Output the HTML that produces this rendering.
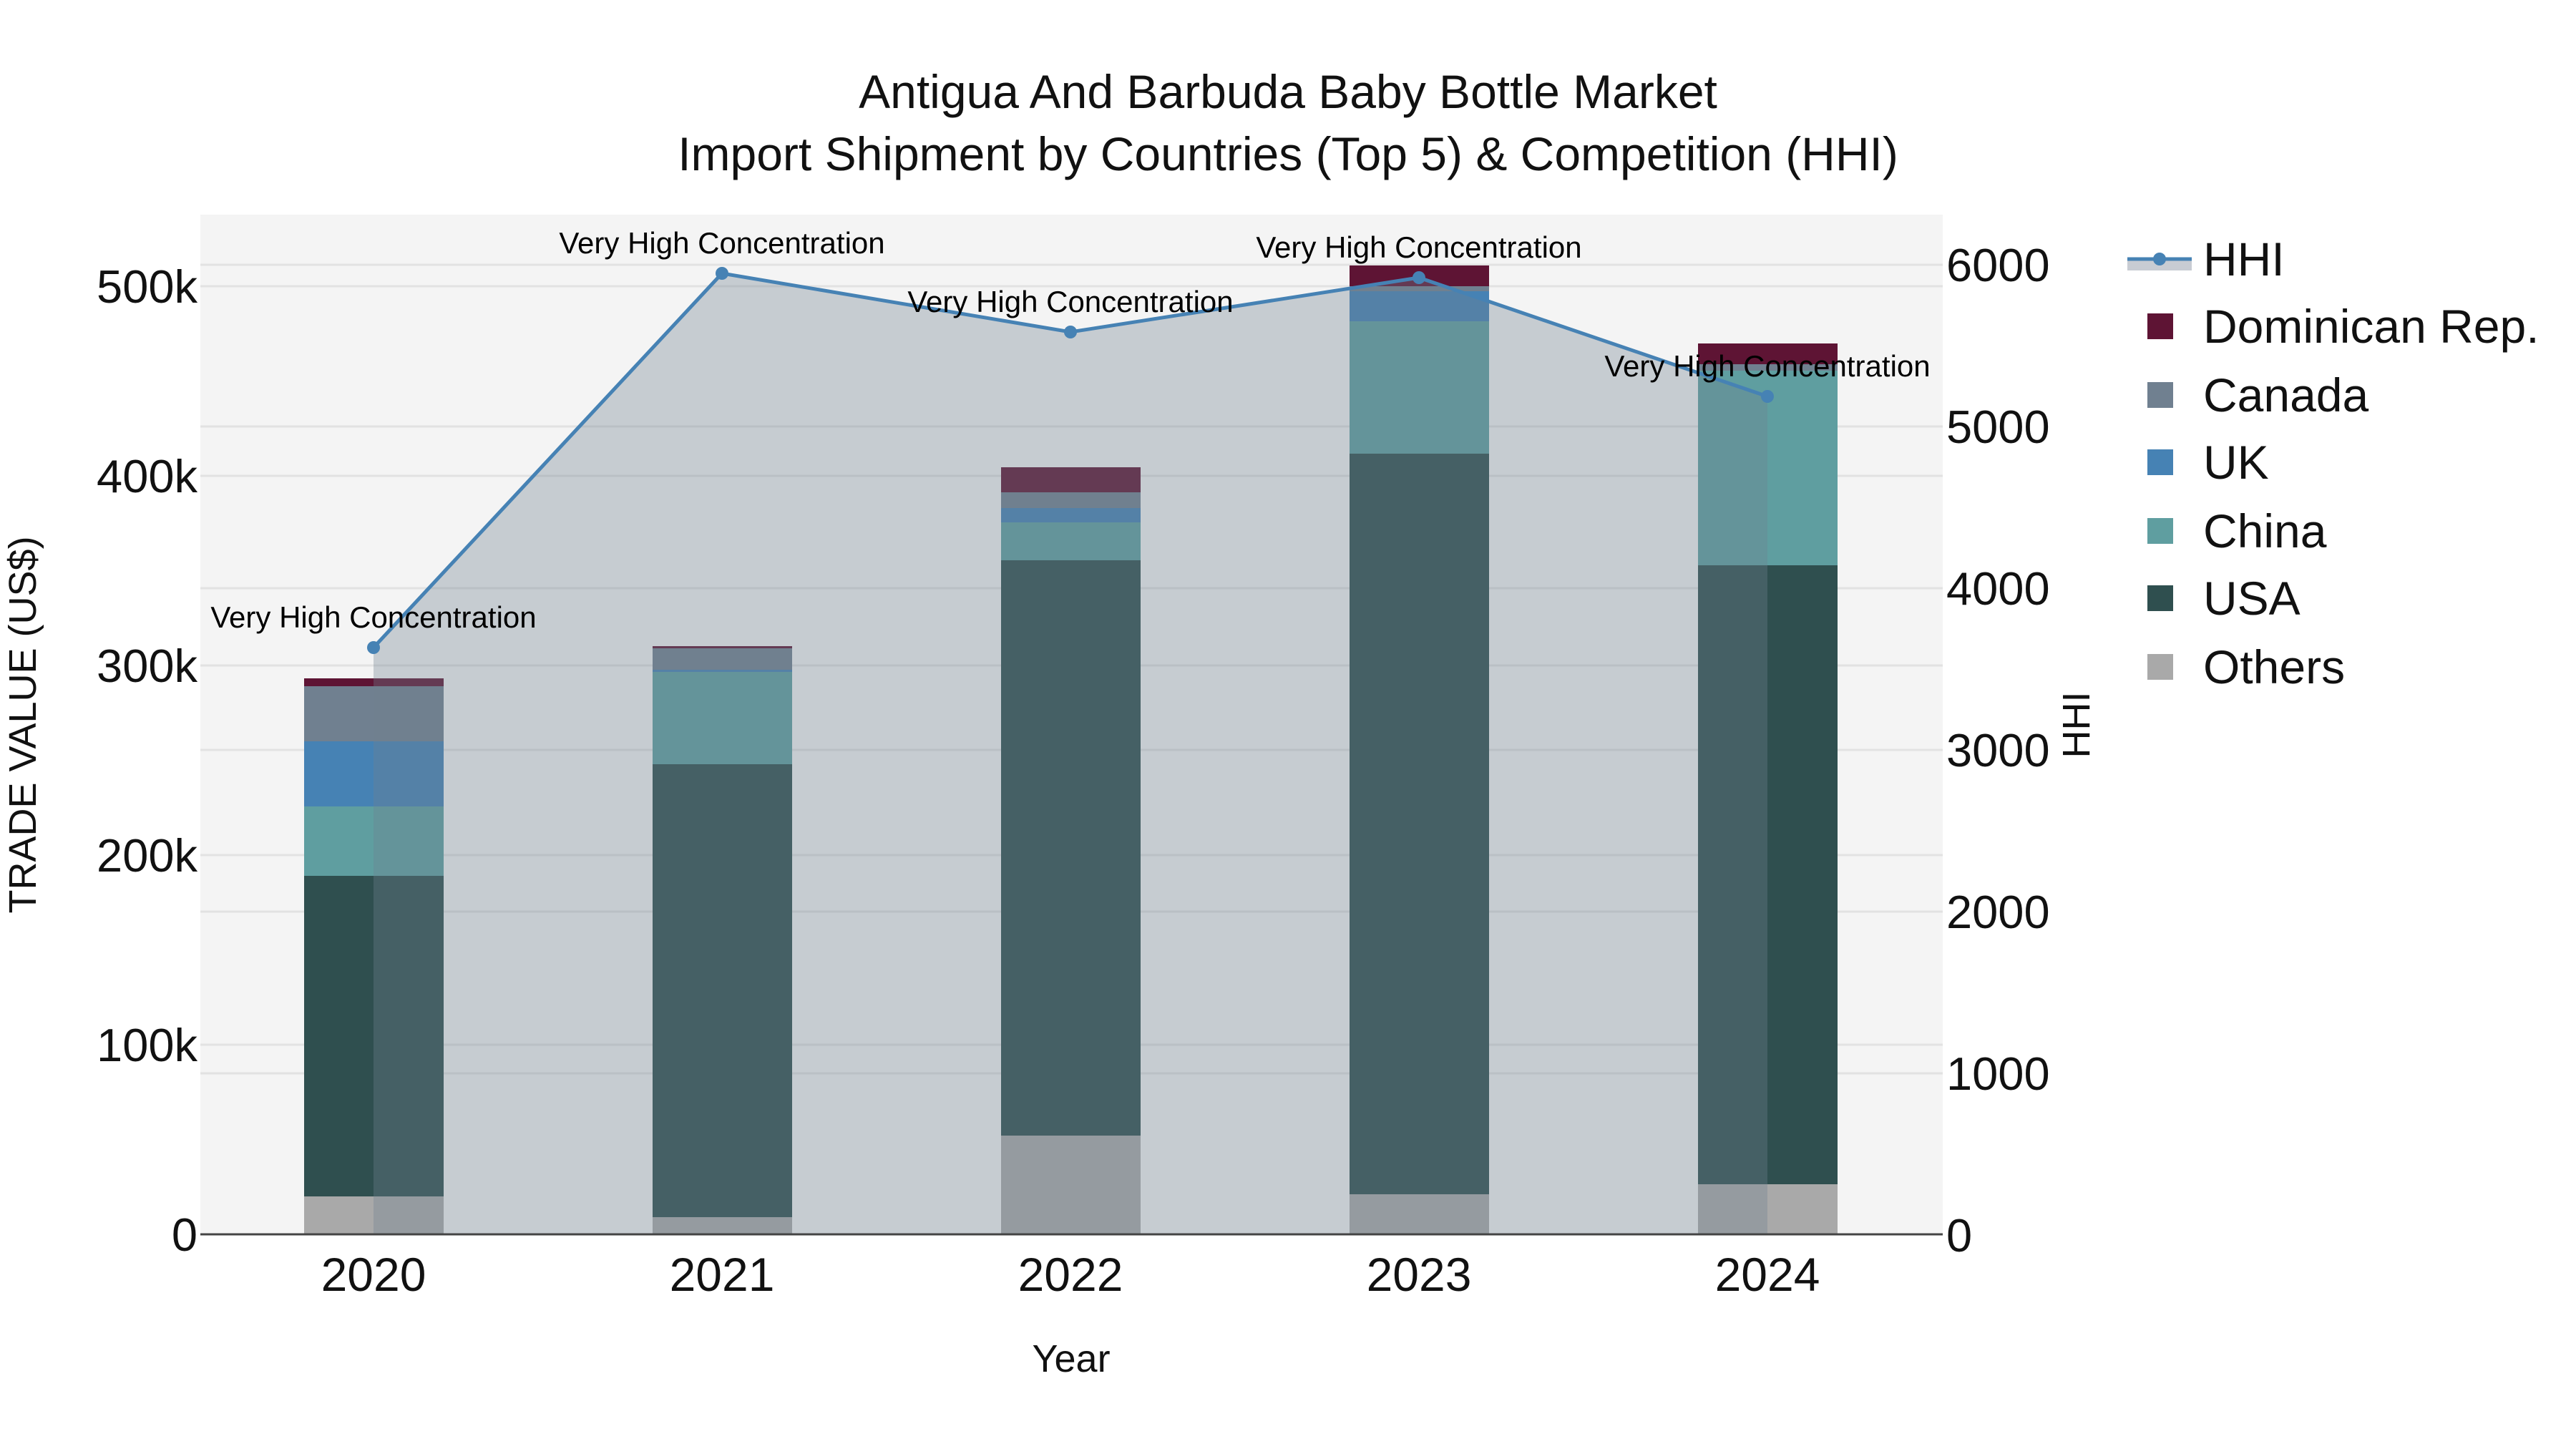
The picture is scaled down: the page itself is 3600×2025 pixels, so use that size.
<!DOCTYPE html>
<html><head><meta charset="utf-8"><style>html,body{margin:0;padding:0;background:#fff}svg{display:block}</style></head>
<body>
<svg width="3600" height="2025" viewBox="0 0 3600 2025" xmlns="http://www.w3.org/2000/svg" font-family="Liberation Sans, Arial, sans-serif">
<rect width="3600" height="2025" fill="#fff"/>
<rect x="280" y="300" width="2435" height="1425" fill="#f4f4f4"/>
<g stroke="#e2e2e2" stroke-width="3">
<line x1="280" x2="2715" y1="400" y2="400"/><line x1="280" x2="2715" y1="665" y2="665"/><line x1="280" x2="2715" y1="930" y2="930"/><line x1="280" x2="2715" y1="1195" y2="1195"/><line x1="280" x2="2715" y1="1460" y2="1460"/>
<line x1="280" x2="2715" y1="370" y2="370"/><line x1="280" x2="2715" y1="596" y2="596"/><line x1="280" x2="2715" y1="822" y2="822"/><line x1="280" x2="2715" y1="1048" y2="1048"/><line x1="280" x2="2715" y1="1274" y2="1274"/><line x1="280" x2="2715" y1="1500" y2="1500"/>
</g>
<g>
<rect x="425" y="1672" width="195" height="53" fill="#a9a9a9"/>
<rect x="425" y="1224" width="195" height="448" fill="#2f4f4f"/>
<rect x="425" y="1127" width="195" height="97" fill="#5f9ea0"/>
<rect x="425" y="1036" width="195" height="91" fill="#4682b4"/>
<rect x="425" y="959" width="195" height="77" fill="#708090"/>
<rect x="425" y="948" width="195" height="11" fill="#5e1434"/>
<rect x="912" y="1701" width="195" height="24" fill="#a9a9a9"/>
<rect x="912" y="1068" width="195" height="633" fill="#2f4f4f"/>
<rect x="912" y="939" width="195" height="129" fill="#5f9ea0"/>
<rect x="912" y="936" width="195" height="3" fill="#4682b4"/>
<rect x="912" y="906" width="195" height="30" fill="#708090"/>
<rect x="912" y="903" width="195" height="3" fill="#5e1434"/>
<rect x="1399" y="1587" width="195" height="138" fill="#a9a9a9"/>
<rect x="1399" y="783" width="195" height="804" fill="#2f4f4f"/>
<rect x="1399" y="730" width="195" height="53" fill="#5f9ea0"/>
<rect x="1399" y="710" width="195" height="20" fill="#4682b4"/>
<rect x="1399" y="688" width="195" height="22" fill="#708090"/>
<rect x="1399" y="653" width="195" height="35" fill="#5e1434"/>
<rect x="1886" y="1669" width="195" height="56" fill="#a9a9a9"/>
<rect x="1886" y="634" width="195" height="1035" fill="#2f4f4f"/>
<rect x="1886" y="449" width="195" height="185" fill="#5f9ea0"/>
<rect x="1886" y="407" width="195" height="42" fill="#4682b4"/>
<rect x="1886" y="400" width="195" height="7" fill="#708090"/>
<rect x="1886" y="371" width="195" height="29" fill="#5e1434"/>
<rect x="2373" y="1655" width="195" height="70" fill="#a9a9a9"/>
<rect x="2373" y="790" width="195" height="865" fill="#2f4f4f"/>
<rect x="2373" y="518" width="195" height="272" fill="#5f9ea0"/>
<rect x="2373" y="509" width="195" height="9" fill="#708090"/>
<rect x="2373" y="480" width="195" height="29" fill="#5e1434"/>
</g>
<polygon points="522,905 1009,382 1496,464 1983,388 2470,554 2470,1725 522,1725" fill="rgba(112,128,144,0.35)"/>
<polyline points="522,905 1009,382 1496,464 1983,388 2470,554" fill="none" stroke="#4682b4" stroke-width="5"/>
<g fill="#4682b4"><circle cx="522" cy="905" r="9"/><circle cx="1009" cy="382" r="9"/><circle cx="1496" cy="464" r="9"/><circle cx="1983" cy="388" r="9"/><circle cx="2470" cy="554" r="9"/></g>
<line x1="280" x2="2715" y1="1725" y2="1725" stroke="#444" stroke-width="3"/>
<g font-size="42" fill="#000" text-anchor="middle">
<text x="522" y="877">Very High Concentration</text>
<text x="1009" y="354">Very High Concentration</text>
<text x="1496" y="436">Very High Concentration</text>
<text x="1983" y="360">Very High Concentration</text>
<text x="2470" y="526">Very High Concentration</text>
</g>
<g font-size="66" fill="#111" text-anchor="middle">
<text x="1800" y="151">Antigua And Barbuda Baby Bottle Market</text>
<text x="1800" y="238">Import Shipment by Countries (Top 5) &amp; Competition (HHI)</text>
</g>
<g font-size="65" fill="#111" text-anchor="end">
<text x="276" y="423">500k</text><text x="276" y="688">400k</text><text x="276" y="953">300k</text><text x="276" y="1218">200k</text><text x="276" y="1483">100k</text><text x="276" y="1748">0</text>
</g>
<g font-size="65" fill="#111" text-anchor="start">
<text x="2720" y="393">6000</text><text x="2720" y="619">5000</text><text x="2720" y="845">4000</text><text x="2720" y="1071">3000</text><text x="2720" y="1297">2000</text><text x="2720" y="1523">1000</text><text x="2720" y="1749">0</text>
</g>
<g font-size="66" fill="#111" text-anchor="middle">
<text x="522" y="1804">2020</text><text x="1009" y="1804">2021</text><text x="1496" y="1804">2022</text><text x="1983" y="1804">2023</text><text x="2470" y="1804">2024</text>
</g>
<text x="1497" y="1917" font-size="54" fill="#111" text-anchor="middle">Year</text>
<text transform="translate(50,1013) rotate(-90)" font-size="54" fill="#111" text-anchor="middle">TRADE VALUE (US$)</text>
<text transform="translate(2920,1013) rotate(-90)" font-size="54" fill="#111" text-anchor="middle">HHI</text>
<rect x="2973" y="362" width="90" height="16" fill="#c8ccd3"/>
<line x1="2973" x2="3063" y1="362" y2="362" stroke="#4682b4" stroke-width="5"/>
<circle cx="3018" cy="362" r="9" fill="#4682b4"/>
<rect x="3001" y="438" width="36" height="36" fill="#5e1434"/>
<rect x="3001" y="534" width="36" height="36" fill="#708090"/>
<rect x="3001" y="628" width="36" height="36" fill="#4682b4"/>
<rect x="3001" y="724" width="36" height="36" fill="#5f9ea0"/>
<rect x="3001" y="818" width="36" height="36" fill="#2f4f4f"/>
<rect x="3001" y="914" width="36" height="36" fill="#a9a9a9"/>
<g font-size="66" fill="#111">
<text x="3079" y="385">HHI</text>
<text x="3079" y="479">Dominican Rep.</text>
<text x="3079" y="575">Canada</text>
<text x="3079" y="669">UK</text>
<text x="3079" y="765">China</text>
<text x="3079" y="859">USA</text>
<text x="3079" y="955">Others</text>
</g>
</svg>
</body></html>
